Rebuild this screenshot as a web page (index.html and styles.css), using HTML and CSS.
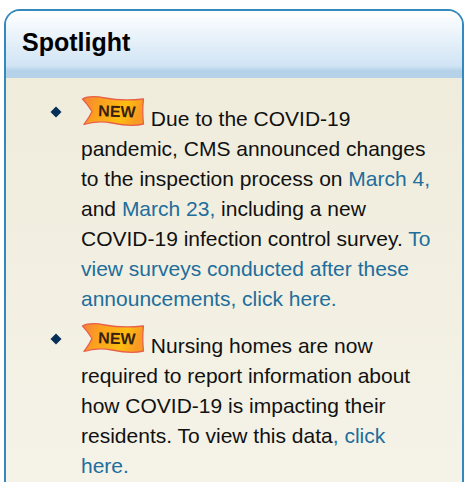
FILE: index.html
```html
<!DOCTYPE html>
<html lang="en">
<head>
<meta charset="utf-8">
<meta name="viewport" content="width=device-width, initial-scale=1">
<title>Spotlight</title>
<link rel="stylesheet" href="styles.css">
</head>
<body>
<svg class="defs" width="0" height="0" aria-hidden="true">
  <defs>
    <linearGradient id="ribbon-fill" x1="0" y1="0" x2="1" y2="0.2">
      <stop offset="0" stop-color="#f4803c"/>
      <stop offset="0.3" stop-color="#fb9f1f"/>
      <stop offset="0.75" stop-color="#fdbd10"/>
      <stop offset="1" stop-color="#f99a22"/>
    </linearGradient>
    <symbol id="ribbon" viewBox="0 0 64 32">
      <path d="M1.500 5C7 2 14 2 24 4C37 6.500 49 6.500 62.500 5C61.500 13 61.500 21 62.500 30C53 32.500 43 31.500 31 29C20 27 12 27.500 3 30.500C6 26.500 9 22 11 17.500C8 12.500 5 8.500 1.500 5Z" fill="url(#ribbon-fill)" stroke="#e8604c" stroke-width="1.300" stroke-linejoin="round"/>
    </symbol>
  </defs>
</svg>
<section class="card">
  <header class="card-header">
    <h2 class="card-title">Spotlight</h2>
  </header>
  <ul class="news">
    <li class="news-item">
      <svg class="bullet" viewBox="0 0 12 12" aria-hidden="true"><path d="M6 .5L11.500 6L6 11.500L.5 6Z" fill="#062f58"/></svg>
      <p class="news-text"><svg class="ribbon" viewBox="0 0 64 32"><use href="#ribbon"/><text class="ribbon-text" x="36" y="23" transform="rotate(2 36 16)">NEW</text></svg> Due to the COVID-19 pandemic, CMS announced changes to the inspection process on <a href="#">March 4,</a> and <a href="#">March 23,</a> including a new COVID-19 infection control survey. <a href="#">To view surveys conducted after these announcements, click here.</a></p>
    </li>
    <li class="news-item">
      <svg class="bullet" viewBox="0 0 12 12" aria-hidden="true"><path d="M6 .5L11.500 6L6 11.500L.5 6Z" fill="#062f58"/></svg>
      <p class="news-text"><svg class="ribbon" viewBox="0 0 64 32"><use href="#ribbon"/><text class="ribbon-text" x="36" y="23" transform="rotate(2 36 16)">NEW</text></svg> Nursing homes are now required to report information about how COVID-19 is impacting their residents. To view this data<a href="#">, click here.</a></p>
    </li>
  </ul>
</section>
</body>
</html>
```
FILE: styles.css
```css
* {
  box-sizing: border-box;
}

body {
  display: flex;
  flex-direction: column;
  min-height: 100vh;
  margin: 0;
  padding: 9px 8px 0 4px;
  background: #fff;
  color: #111;
  font-family: "Liberation Sans", Arial, sans-serif;
  font-size: 21px;
  line-height: 30px;
}

.defs {
  position: absolute;
}

.card {
  flex: 1;
  border: 2px solid #3388bd;
  border-bottom: 0;
  border-radius: 16px 16px 0 0;
  background: linear-gradient(#eeebda, #f5f3e8);
  overflow: hidden;
}

.card-header {
  padding: 16px 16px 21px;
  background: linear-gradient(#fff 0%, #d0e4f4 82%, #b6d2e9 89%, #b6d2e9 100%);
}

.card-title {
  margin: 0;
  color: #000;
  font-size: 25px;
  line-height: 30px;
}

.news {
  margin: 0;
  padding: 16px 30px 0 44px;
  list-style: none;
}

.news-item {
  display: flex;
  align-items: flex-start;
  gap: 19px;
}

.news-item + .news-item {
  margin-top: 7px;
}

.bullet {
  flex: none;
  width: 12px;
  height: 12px;
  margin-top: 12px;
}

.news-text {
  flex: 1;
  margin: 0;
}

.news-text a {
  color: #216d9c;
  text-decoration: none;
}

.ribbon {
  width: 64px;
  height: 32px;
}

.ribbon-text {
  fill: #38200f;
  font-size: 16px;
  font-weight: bold;
  text-anchor: middle;
}
```
